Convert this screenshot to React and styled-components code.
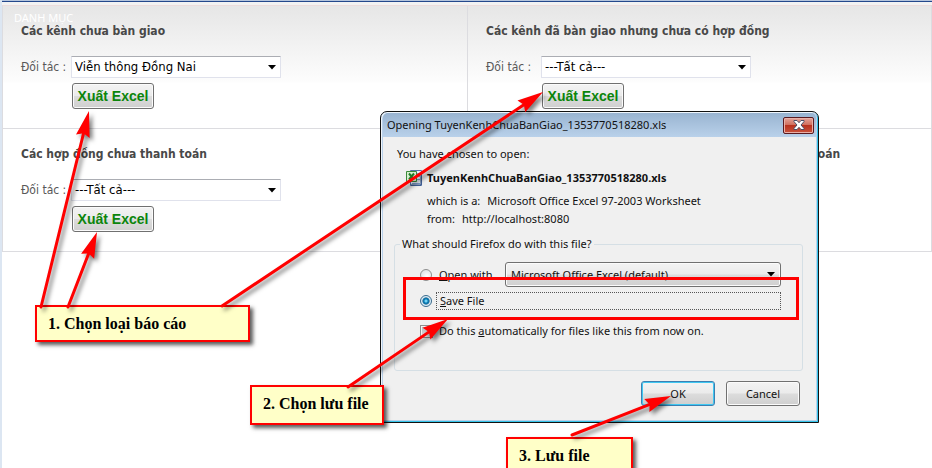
import React, { useId } from "react";
import styled, { createGlobalStyle, css } from "styled-components";

const tahoma = `"DejaVu Sans Condensed", "DejaVu Sans", Tahoma, sans-serif`;
const ui = `"Noto Sans", "Open Sans", "Segoe UI", sans-serif`;
const arial = `"Liberation Sans", Arial, sans-serif`;
const times = `"Liberation Serif", "Times New Roman", serif`;

const GlobalStyle = createGlobalStyle`
  * { box-sizing: border-box; }
  body { margin: 0; background: #fff; overflow: hidden; }
`;

const Page = styled.div`
  position: relative;
  min-height: 100vh;
  overflow: hidden;
  border-left: 2px solid #dce6f2;
  background: #fff;
`;

const TopBar = styled.header`
  height: 5px;
  border-top: 1px solid #b4c4dc;
  background: linear-gradient(#24488c 1px, #f2f2f2 1px);
`;

const MenuCaption = styled.span`
  position: absolute;
  top: 10px;
  left: 12px;
  font: 11px/16px ${ui};
  color: #fff;
`;

const ReportGrid = styled.main`
  display: grid;
  grid-template-columns: 1fr 1fr;
  border: solid #dcdce0;
  border-width: 1px 1px 0;
  border-top-color: #ecdcdc;
  background: linear-gradient(#e6e6e6, #fdfdfd 76px, #fff 77px);
  font-family: ${tahoma};
`;

const ReportCell = styled.section`
  min-height: 123px;
  padding: 16px 18px 0;
  border-bottom: 1px solid #dcdce0;
  &:nth-child(even) { border-left: 1px solid #dcdce0; }
`;

const ReportTitle = styled.h2`
  margin: 0 0 15px;
  font-size: 12px;
  line-height: 19px;
  font-weight: bold;
  color: #484848;
  white-space: nowrap;
`;

const ReportForm = styled.form`
  display: grid;
  grid-template-columns: ${(p) => (p.$wide ? 55 : 50)}px 210px;
  row-gap: 5px;
  align-items: center;
`;

const PartnerLabel = styled.label`
  font-size: 12px;
  line-height: 18px;
  color: #585858;
`;

const SelectBox = styled.span`
  display: grid;
  align-items: center;
  flex: 1;
  > * { grid-area: 1 / 1; }
  > svg { justify-self: end; margin-right: ${(p) => p.$inset}px; pointer-events: none; }
`;

const PartnerSelect = styled.select`
  appearance: none;
  width: 100%;
  height: 22px;
  margin: 0;
  padding: 0 20px 0 3px;
  border: 1px solid #e0e2ec;
  border-top-color: #abadb3;
  border-radius: 1px;
  background: #fff;
  font: 13px/18px ${tahoma};
  color: #000;
`;

const raised = css`
  border: 1px solid #707070;
  border-radius: 3px;
  background: linear-gradient(#f3f3f3, #ebebeb 48%, #dcdcdc 52%, #cfcfcf);
  box-shadow: inset 0 0 0 1px #fbfbfb;
`;

const ExportButton = styled.button`
  ${raised}
  grid-column: 2;
  justify-self: start;
  margin-left: 1px;
  width: 82px;
  height: 26px;
  padding: 0;
  font: bold 14px/20px ${arial};
  color: #0c850c;
  white-space: nowrap;
`;

const Dialog = styled.div`
  position: absolute;
  top: 111px;
  left: 378px;
  width: 439px;
  padding: 0 2px 2px;
  border: 1px solid #111;
  border-radius: 7px 7px 0 0;
  background: #b9d1ea;
  box-shadow: inset -1px -1px 0 #35c4ea, inset 1px 1px 0 #eef5fc;
  font: 11px/16px ${ui};
  color: #111;
`;

const DialogBar = styled.div`
  display: flex;
  justify-content: space-between;
  align-items: center;
  height: 24px;
  margin-top: 1px;
  padding: 0 2px 0 4px;
  border-radius: 5px 5px 0 0;
  background: linear-gradient(#99b4d1, #b9d1ea);
  white-space: nowrap;
`;

const DialogTitle = styled.h1`
  margin: 0;
  font-size: 11px;
  font-weight: 400;
`;

const CloseButton = styled.button`
  display: grid;
  place-items: center;
  width: 31px;
  height: 17px;
  padding: 0;
  border: 1px solid #5a1a20;
  border-radius: 2px;
  background: linear-gradient(#e5a49a, #d0705f 45%, #b8321f 50%, #c9533d);
  box-shadow: inset 0 0 0 1px #e9b0a8;
`;

const DialogBody = styled.div`
  padding: 9px 13px 14px 11px;
  background: #f0f0f0;
`;

const Intro = styled.p`
  margin: 0 0 8px 3px;
`;

const FileInfo = styled.div`
  display: grid;
  grid-template-columns: 16px 1fr;
  column-gap: 5px;
  margin-left: 12px;
  > svg { grid-area: 1 / 1; }
`;

const FileName = styled.strong`
  font-weight: 700;
  grid-column: 2;
`;

const FileFact = styled.div`
  grid-column: 2;
  display: flex;
  gap: 7px;
  margin-top: ${(p) => p.$top}px;
  white-space: nowrap;
`;

const ActionGroup = styled.fieldset`
  min-width: 0;
  height: 135px;
  margin: 9px 0 10px;
  padding: 10px 21px 0 25px;
  border: 1px solid #d5dfe5;
  border-radius: 3px;
  > legend { margin-left: -20px; padding: 0 2px; }
`;

const OptionRow = styled.div`
  display: flex;
  align-items: center;
  gap: ${(p) => p.$gap}px;
  height: ${(p) => p.$height}px;
  margin-bottom: ${(p) => p.$after}px;
  white-space: nowrap;
`;

const Radio = styled.input`
  appearance: none;
  flex: none;
  width: 12px;
  height: 12px;
  margin: 0;
  border: 1px solid #8e8f8f;
  border-radius: 50%;
  background: radial-gradient(circle at 60% 60%, #fff, #d4d8da);
  &:checked {
    border-color: #3a6a8c;
    background: radial-gradient(circle, #6fd3f5 0 1px, #0b76ad 2px 3px, #0a3d62 3px, #d8eefa 4px);
  }
`;

const Tick = styled.input`
  appearance: none;
  flex: none;
  width: 13px;
  height: 13px;
  margin: 0;
  border: 1px solid #8e8f8f;
  background: linear-gradient(135deg, #b4b9be, #f2f2f2);
  box-shadow: inset 0 0 0 1px #f4f4f4;
`;

const OpenLabel = styled.label`
  width: 59px;
`;

const FocusLabel = styled.label`
  flex: 1;
  height: 18px;
  padding-left: 3px;
  border: 1px dotted #555;
`;

const AppSelect = styled.select`
  ${raised}
  appearance: none;
  width: 100%;
  height: 25px;
  margin: 0;
  padding: 0 20px 0 5px;
  font: 11px/18px ${ui};
  color: #111;
`;

const Actions = styled.div`
  display: flex;
  justify-content: flex-end;
  gap: 11px;
  padding-right: 3px;
`;

const DialogButton = styled.button`
  ${raised}
  width: 74px;
  height: 25px;
  padding: 0;
  font: 11px/18px ${ui};
  color: #111;
  ${(p) => p.$primary && css`
    border-color: #3c7fb1;
    box-shadow: inset 0 0 0 1px #3fc8f2;
  `}
`;

const Highlight = styled.div`
  position: absolute;
  top: 277px;
  left: 401px;
  width: 396px;
  height: 43px;
  border: 3px solid #f00;
`;

const Note = styled.aside`
  position: absolute;
  top: ${(p) => p.$y}px;
  left: ${(p) => p.$x}px;
  width: ${(p) => p.$w}px;
  height: ${(p) => p.$h}px;
  padding: 7px 11px;
  border: 2px solid #f00;
  background: #ffffc8;
  box-shadow: 3px 3px 4px rgba(0, 0, 0, 0.65);
  font: bold 16px/20px ${times};
  color: #000;
  white-space: nowrap;
`;

const ArrowLayer = styled.svg`
  position: absolute;
  top: 0;
  left: -2px;
  width: 932px;
  height: 468px;
  pointer-events: none;
  filter: drop-shadow(3px 3px 2px rgba(0, 0, 0, 0.5));
`;

const Caret = () => (
  <svg width="8" height="5" viewBox="0 0 8 5" aria-hidden="true">
    <path d="M0 0H8L4 4.500Z" fill="#000" />
  </svg>
);

const CloseMark = () => (
  <svg width="12" height="10" viewBox="0 0 12 10" aria-hidden="true">
    <path d="M1 .5H4L6 2.700 8 .5H11V1.600L8 5l3 3.400V9.500H8L6 7.300 4 9.500H1V8.400L4 5 1 1.600Z" fill="#fff" stroke="#4b5068" strokeWidth="1" />
  </svg>
);

const ExcelIcon = () => (
  <svg width="16" height="16" viewBox="0 0 16 16" aria-hidden="true">
    <path d="M4.500.5H15.500V15.500H4.500Z" fill="#e9f1fb" stroke="#5573a8" />
    <path d="M11 3.500H14M11 6.500H14M11 9.500H14M6 13.500H14" stroke="#7f9fce" />
    <path d="M15 2V15H5" fill="none" stroke="#2e4e86" />
    <path d="M.5 1.500H10.500V11.500H.5Z" fill="#d6efcf" stroke="#3c8a3a" />
    <path d="M3 3.500 8 9.500M8 3.500 3 9.500" stroke="#1f7a26" strokeWidth="2" />
  </svg>
);

const arrows = [
  [41, 307, 89, 111],
  [68, 307, 97, 232],
  [222, 306, 543, 92],
  [348, 387, 448, 319],
  [572, 435, 671, 396],
];

const Arrow = ({ line: [x1, y1, x2, y2] }) => {
  const length = Math.hypot(x2 - x1, y2 - y1);
  const angle = (Math.atan2(y2 - y1, x2 - x1) * 180) / Math.PI;
  return (
    <g transform={`translate(${x1} ${y1}) rotate(${angle})`}>
      <path d={`M0 0H${length - 18}`} stroke="#f00" strokeWidth="3" strokeLinecap="round" />
      <path d={`M${length} 0l-26 7 3-7-3-7Z`} fill="#f00" />
    </g>
  );
};

const Report = ({ title, partner, wide }) => {
  const id = useId();
  return (
    <ReportCell>
      <ReportTitle>{title}</ReportTitle>
      {partner && (
        <ReportForm $wide={wide}>
          <PartnerLabel htmlFor={id}>Đối tác :</PartnerLabel>
          <SelectBox $inset={5}>
            <PartnerSelect id={id}>
              <option>{partner}</option>
            </PartnerSelect>
            <Caret />
          </SelectBox>
          <ExportButton type="button">Xuất Excel</ExportButton>
        </ReportForm>
      )}
    </ReportCell>
  );
};

export default function App() {
  return (
    <Page>
      <GlobalStyle />
      <TopBar />
      <ReportGrid>
        <Report title="Các kênh chưa bàn giao" partner="Viễn thông Đồng Nai" />
        <Report title="Các kênh đã bàn giao nhưng chưa có hợp đồng" partner="---Tất cả---" wide />
        <Report title="Các hợp đồng chưa thanh toán" partner="---Tất cả---" />
        <Report title="Các kênh đã bàn giao có hợp đồng nhưng chưa thanh toán" />
      </ReportGrid>
      <MenuCaption>DANH MỤC</MenuCaption>

      <Dialog role="dialog" aria-labelledby="dialog-title">
        <DialogBar>
          <DialogTitle id="dialog-title">Opening TuyenKenhChuaBanGiao_1353770518280.xls</DialogTitle>
          <CloseButton type="button" aria-label="Close"><CloseMark /></CloseButton>
        </DialogBar>
        <DialogBody>
          <Intro>You have chosen to open:</Intro>
          <FileInfo>
            <ExcelIcon />
            <FileName>TuyenKenhChuaBanGiao_1353770518280.xls</FileName>
            <FileFact $top={7}><span>which is a:</span><span>Microsoft Office Excel 97-2003 Worksheet</span></FileFact>
            <FileFact $top={2}><span>from:</span><span>http://localhost:8080</span></FileFact>
          </FileInfo>
          <ActionGroup>
            <legend>What should Firefox do with this file?</legend>
            <OptionRow $gap={7} $height={25} $after={5}>
              <Radio type="radio" name="action" id="open-with" />
              <OpenLabel htmlFor="open-with"><u>O</u>pen with</OpenLabel>
              <SelectBox $inset={6}>
                <AppSelect aria-label="Application">
                  <option>Microsoft Office Excel (default)</option>
                </AppSelect>
                <Caret />
              </SelectBox>
            </OptionRow>
            <OptionRow $gap={4} $height={18} $after={12}>
              <Radio type="radio" name="action" id="save-file" defaultChecked />
              <FocusLabel htmlFor="save-file"><u>S</u>ave File</FocusLabel>
            </OptionRow>
            <OptionRow $gap={6} $height={18} $after={0}>
              <Tick type="checkbox" id="automatic" />
              <label htmlFor="automatic">Do this <u>a</u>utomatically for files like this from now on.</label>
            </OptionRow>
          </ActionGroup>
          <Actions>
            <DialogButton type="button" $primary>OK</DialogButton>
            <DialogButton type="button">Cancel</DialogButton>
          </Actions>
        </DialogBody>
      </Dialog>

      <Highlight />
      <Note $x={33} $y={305} $w={215} $h={37}>1. Chọn loại báo cáo</Note>
      <Note $x={248} $y={385} $w={134} $h={40}>2. Chọn lưu file</Note>
      <Note $x={504} $y={437} $w={127} $h={40}>3. Lưu file</Note>
      <ArrowLayer viewBox="0 0 932 468" aria-hidden="true">
        {arrows.map((line) => <Arrow key={line.join()} line={line} />)}
      </ArrowLayer>
    </Page>
  );
}
